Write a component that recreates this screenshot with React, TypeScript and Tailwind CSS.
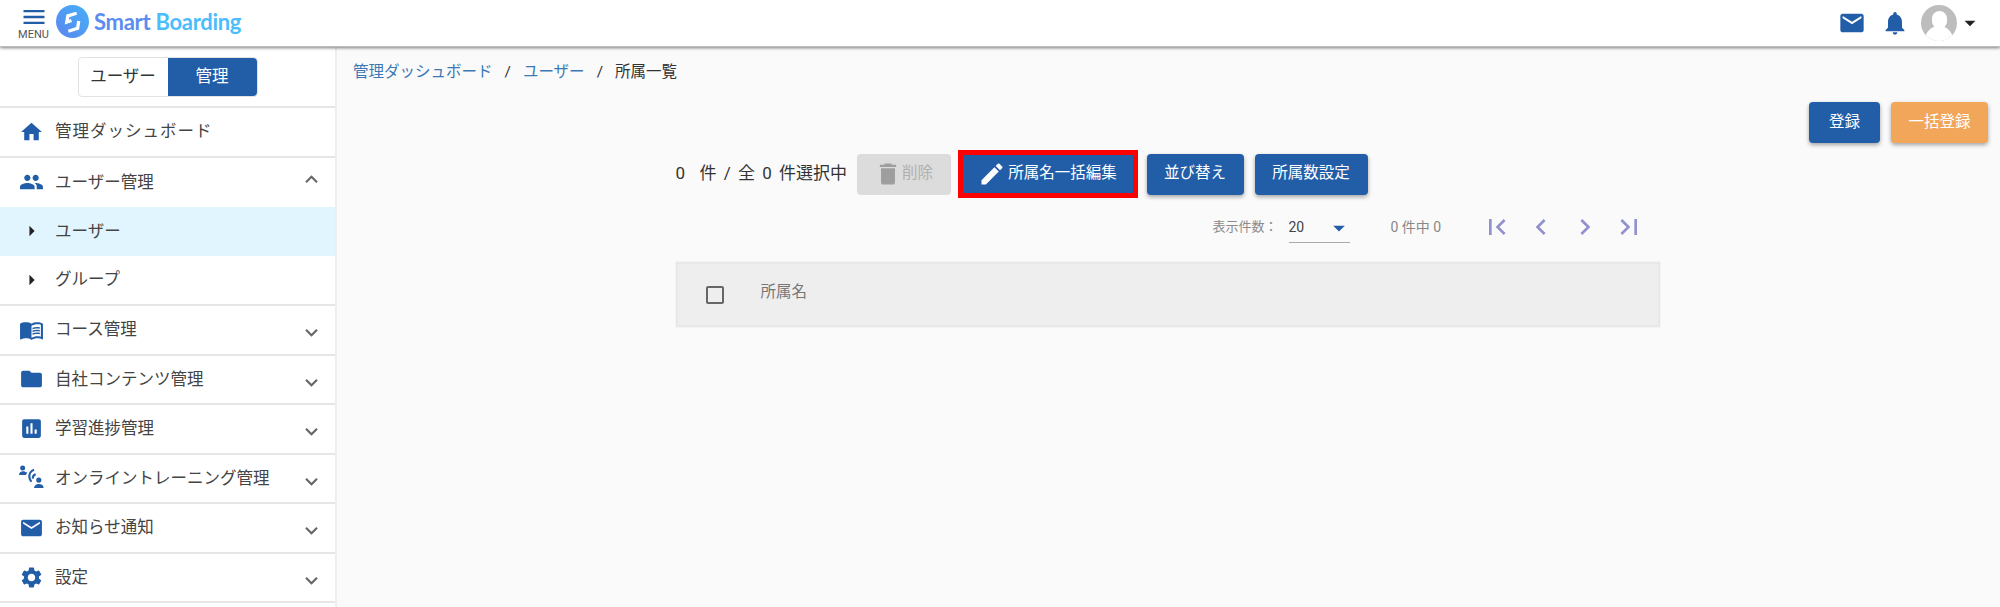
import React from "react";
import {
  MdArrowDropDown,
  MdArrowRight,
  MdAssessment,
  MdChevronLeft,
  MdChevronRight,
  MdCheckBoxOutlineBlank,
  MdDelete,
  MdEdit,
  MdEmail,
  MdExpandLess,
  MdExpandMore,
  MdFirstPage,
  MdFolder,
  MdHome,
  MdLastPage,
  MdMenu,
  MdMenuBook,
  MdNotifications,
  MdPeople,
  MdSettings,
} from "react-icons/md";

const OnlineIcon = () => (
  <svg viewBox="0 0 24 24" className="w-[25px] h-[25px] -mt-[2px]">
    <circle cx="3.500" cy="2.800" r="2.400" fill="#225ea8" />
    <path d="M0 9.500c0-2.200 2-3.500 3.800-3.500 1.500 0 3 .5 4.200 1.500L6.500 9.500z" fill="#225ea8" />
    <path d="M14.500 4.500c-3 1-5 4-4.500 7.500.2 1.500 1 3 2 4" fill="none" stroke="#225ea8" strokeWidth="2" />
    <path d="M16 8.800c-1.800.6-2.900 2.400-2.700 4.200" fill="none" stroke="#225ea8" strokeWidth="2" />
    <circle cx="19" cy="14.500" r="2.500" fill="#225ea8" />
    <path d="M14.500 22c0-2.500 2.500-3.800 4.500-3.800s4.500.8 4.500 3.300V22z" fill="#225ea8" />
  </svg>
);

interface NavItemProps {
  icon: React.ReactNode;
  label: string;
  open?: boolean;
  chevron?: boolean;
  labelClass?: string;
}

const NavItem: React.FC<NavItemProps> = ({ icon, label, open, chevron = true, labelClass = "" }) => (
  <div className={`h-[49.500px] flex items-center pl-[19px] pr-[11px] shrink-0 ${open ? "" : "border-b-2 border-[#e6e6e6]"}`}>
    <span className="w-[25px] flex justify-center shrink-0">{icon}</span>
    <span className={`ml-[11px] flex-1 text-[16.500px] text-[#444] pt-[2px] ${labelClass}`}>{label}</span>
    {chevron &&
      (open ? (
        <MdExpandLess className="text-[25px] text-[#666] -mt-[6px]" />
      ) : (
        <MdExpandMore className="text-[25px] text-[#666] mt-[6px]" />
      ))}
  </div>
);

const SubItem = ({ label, active }: { label: string; active?: boolean }) => (
  <div className={`h-[48.500px] flex items-center pl-[19px] shrink-0 ${active ? "bg-[#e1f5fe]" : ""}`}>
    <span className="w-[25px] flex justify-center">
      <MdArrowRight className="text-[26px] text-[#222]" />
    </span>
    <span className="ml-[11px] text-[16.500px] text-[#444] pt-[2px]">{label}</span>
  </div>
);

const Btn = ({ children, className = "" }: { children: React.ReactNode; className?: string }) => (
  <button className={`h-[41px] rounded-[4px] bg-[#225ea8] text-white text-[15.500px] flex items-center justify-center shadow-[0_2px_4px_rgba(0,0,0,0.35)] ${className}`}>
    {children}
  </button>
);

export default function App() {
  return (
    <div className="h-[607px] w-[2000px] overflow-hidden flex flex-col bg-[#fafafa] font-['Roboto','Noto_Sans_CJK_JP',sans-serif]">
      <header className="h-[47px] bg-white shrink-0 flex items-center shadow-[0_1px_3px_rgba(0,0,0,0.5)] relative z-10 border-b border-[#bdbdbd]">
        <div className="w-[56px] flex flex-col items-center shrink-0 pl-[11px] -mt-[1px]">
          <MdMenu className="text-[28px] text-[#225ea8] -my-[2px]" />
          <span className="text-[11px] leading-[11px] text-[#555]">MENU</span>
        </div>
        <svg viewBox="0 0 32 32" className="w-[33px] h-[33px] shrink-0 -mt-[3px]">
          <defs>
            <linearGradient id="logo" x1="0" y1="1" x2="1" y2="0">
              <stop offset="0" stopColor="#5b84ee" />
              <stop offset="1" stopColor="#45b2f8" />
            </linearGradient>
          </defs>
          <circle cx="16" cy="16" r="16" fill="url(#logo)" />
          <path d="M20 8L11.500 10.500L10.500 16.500L15 15" fill="none" stroke="#fff" strokeWidth="3.200" />
          <path d="M22 15.500L21 22.500L12 25.500" fill="none" stroke="#fff" strokeWidth="3.200" />
        </svg>
        <span className="ml-[5px] text-[22px] leading-none font-['Lato',sans-serif] font-bold tracking-[-0.3px] -mt-[3px]">
          <span className="text-[#5c8cf0]">Smart</span> <span className="text-[#4cbdfb]">Boarding</span>
        </span>
        <div className="ml-auto flex items-center pr-[17px]">
          <MdEmail className="text-[28px] text-[#225ea8]" />
          <MdNotifications className="text-[28px] text-[#225ea8] ml-[15px]" />
          <div className="w-[36px] h-[36px] rounded-full bg-[#bdbdbd] ml-[12px] overflow-hidden flex flex-col items-center">
            <div className="w-[15px] h-[18px] rounded-full bg-white mt-[6px] shrink-0" />
            <div className="w-[28px] h-[18px] rounded-t-full bg-white -mt-[3px] shrink-0" />
          </div>
          <MdArrowDropDown className="text-[26px] text-[#222]" />
        </div>
      </header>
      <div className="flex flex-1 min-h-0">
        <aside className="w-[337px] shrink-0 bg-white border-r-2 border-[#eeeeee] flex flex-col overflow-hidden">
          <div className="h-[61px] border-b-2 border-[#e6e6e6] flex items-start justify-center shrink-0 pt-[10px]">
            <div className="flex w-[180px] h-[40px] rounded-[4px] border border-[#e3e3e3] text-[16.500px]">
              <span className="w-[89px] flex items-center justify-center text-[#333]">ユーザー</span>
              <span className="flex-1 flex items-center justify-center bg-[#225ea8] text-white rounded-r-[4px]">管理</span>
            </div>
          </div>
          <NavItem icon={<MdHome className="text-[26px] text-[#225ea8]" />} label="管理ダッシュボード" chevron={false} labelClass="tracking-[1px]" />
          <NavItem icon={<MdPeople className="text-[28px] text-[#225ea8]" />} label="ユーザー管理" open />
          <SubItem label="ユーザー" active />
          <div className="border-b-2 border-[#e6e6e6] shrink-0">
            <SubItem label="グループ" />
          </div>
          <NavItem icon={<MdMenuBook className="text-[28px] text-[#225ea8]" />} label="コース管理" />
          <NavItem icon={<MdFolder className="text-[28px] text-[#225ea8]" />} label="自社コンテンツ管理" />
          <NavItem icon={<MdAssessment className="text-[27px] text-[#225ea8]" />} label="学習進捗管理" />
          <NavItem icon={<OnlineIcon />} label="オンライントレーニング管理" />
          <NavItem icon={<MdEmail className="text-[28px] text-[#225ea8]" />} label="お知らせ通知" />
          <NavItem icon={<MdSettings className="text-[27px] text-[#225ea8]" />} label="設定" />
        </aside>
        <main className="flex-1 min-w-0 flex flex-col">
          <nav className="pl-[16px] pt-[14px] text-[15.500px] leading-[22px] flex text-[#333]">
            <span className="text-[#3b78b5]">管理ダッシュボード</span>
            <span className="mx-[12px]">/</span>
            <span className="text-[#3b78b5]">ユーザー</span>
            <span className="mx-[12px]">/</span>
            <span>所属一覧</span>
          </nav>
          <div className="flex justify-end gap-[11px] pr-[12px] mt-[19px]">
            <Btn className="w-[71px]">登録</Btn>
            <Btn className="w-[97px] !bg-[#f2a65a]">一括登録</Btn>
          </div>
          <div className="w-[984px] mx-auto mt-[6px] -translate-x-[1px]">
            <div className="flex items-center h-[50px]">
              <span className="text-[17px] text-[#333] w-[181px] whitespace-pre [word-spacing:3px]">0  件 / 全 0 件選択中</span>
              <button className="w-[94px] h-[41px] rounded-[4px] bg-[#dcdcdc] text-[#b0b0b0] text-[15.500px] flex items-center justify-center">
                <MdDelete className="text-[28px] text-[#9e9e9e]" />
                削除
              </button>
              <div className="ml-[7px] border-[5px] border-[#ff0000] w-[180px] h-[48px]">
                <div className="w-full h-full bg-[#225ea8] text-white text-[15.500px] flex items-center justify-center">
                  <MdEdit className="text-[28px] mr-[2px]" />
                  所属名一括編集
                </div>
              </div>
              <Btn className="ml-[9px] w-[97px]">並び替え</Btn>
              <Btn className="ml-[11px] w-[113px]">所属数設定</Btn>
            </div>
            <div className="flex items-center h-[36px] mt-[10px] text-[13px] text-[#8a8a8a]">
              <span className="ml-[537px] w-[76px]">表示件数：</span>
              <div className="w-[61px] h-[30px] border-b border-[#aaa] flex items-center justify-between text-[14px] text-[#444] mt-[2px]">
                20
                <MdArrowDropDown className="text-[28px] text-[#225ea8] -mr-[3px]" />
              </div>
              <span className="ml-[41px] w-[71px] text-[14px] text-[#888]">0 件中 0</span>
              <div className="flex text-[#9191cf] text-[32px] gap-[12px] ml-[19px]">
                <MdFirstPage />
                <MdChevronLeft />
                <MdChevronRight />
                <MdLastPage />
              </div>
            </div>
            <div className="h-[65px] mt-[17px] bg-[#eeeeee] border-2 border-[#e8e8e8] flex items-center shadow-[0_0_0_1px_#f4f4f4]">
              <MdCheckBoxOutlineBlank className="text-[24px] text-[#666] ml-[25px]" />
              <span className="ml-[34px] text-[15.500px] text-[#777] -mt-[3px]">所属名</span>
            </div>
          </div>
        </main>
      </div>
    </div>
  );
}
